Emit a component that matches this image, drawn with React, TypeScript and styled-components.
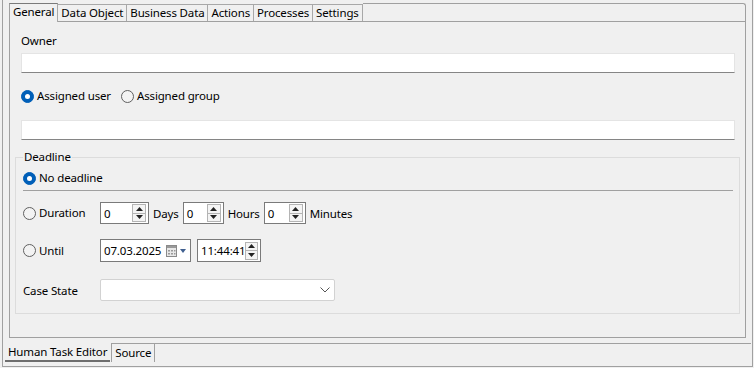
import styled, { createGlobalStyle } from 'styled-components';

const GlobalStyle = createGlobalStyle`
  html, body {
    margin: 0;
    padding: 0;
    background: #f0f0f0;
  }
  body {
    font-family: "Segoe UI", "Noto Sans", sans-serif;
    font-size: 11.5px;
    letter-spacing: -0.15px;
    color: #000;
  }
  * {
    box-sizing: border-box;
  }
`;

const topTabs = ['General', 'Data Object', 'Business Data', 'Actions', 'Processes', 'Settings'];

const SpinArrows = () => (
  <SpinButtons>
    <SpinButton>
      <svg width='7' height='4' viewBox='0 0 7 4'>
        <path d='M0 4 L3.5 0 L7 4 Z' fill='#222' />
      </svg>
    </SpinButton>
    <SpinButton>
      <svg width='7' height='4' viewBox='0 0 7 4'>
        <path d='M0 0 L7 0 L3.5 4 Z' fill='#222' />
      </svg>
    </SpinButton>
  </SpinButtons>
);

const Radio = ({ checked, label }: { checked?: boolean; label: string }) => (
  <RadioItem>
    <RadioDot $checked={checked} />
    <span>{label}</span>
  </RadioItem>
);

const App = () => {
  return (
    <>
      <GlobalStyle />
      <Screen>
        <Frame>
          <Folder>
            <TabStrip>
              {topTabs.map((t, i) => (
                <Tab key={t} $active={i === 0}>
                  {t}
                </Tab>
              ))}
              <TabFiller />
            </TabStrip>
            <Panel>
              <Label>Owner</Label>
              <TextInput $top={4} />
              <RadioRow>
                <Radio checked label='Assigned user' />
                <Radio label='Assigned group' />
              </RadioRow>
              <TextInput $top={16} />

              <Group>
                <Legend>Deadline</Legend>
                <Radio checked label='No deadline' />
                <Separator />

                <FormRow $top={11}>
                  <RowLabel>
                    <Radio label='Duration' />
                  </RowLabel>
                  <SpinBox $width={49}>
                    <SpinValue>0</SpinValue>
                    <SpinArrows />
                  </SpinBox>
                  <Unit>Days</Unit>
                  <SpinBox $width={41}>
                    <SpinValue>0</SpinValue>
                    <SpinArrows />
                  </SpinBox>
                  <Unit>Hours</Unit>
                  <SpinBox $width={42}>
                    <SpinValue>0</SpinValue>
                    <SpinArrows />
                  </SpinBox>
                  <Unit>Minutes</Unit>
                </FormRow>

                <FormRow $top={15}>
                  <RowLabel>
                    <Radio label='Until' />
                  </RowLabel>
                  <SpinBox $width={91} $height={23}>
                    <SpinValue>07.03.2025</SpinValue>
                    <svg width='22' height='12' viewBox='0 0 22 12'>
                      <rect x='0.5' y='0.5' width='10' height='11' fill='#e8e8e8' stroke='#8a8a8a' />
                      <rect x='1' y='1' width='9' height='2' fill='#9a9a9a' />
                      <path d='M2 5h2v1.5H2zM5 5h2v1.5H5zM8 5h1.5v1.5H8zM2 8h2v1.5H2zM5 8h2v1.5H5zM8 8h1.5v1.5H8z' fill='#9a9a9a' />
                      <path d='M14 4 L20 4 L17 8 Z' fill='#3f5f8f' />
                    </svg>
                  </SpinBox>
                  <SpinBox $width={64} $height={23} $gap={6}>
                    <SpinValue>11:44:41</SpinValue>
                    <SpinArrows />
                  </SpinBox>
                </FormRow>

                <FormRow $top={17}>
                  <RowLabel>Case State</RowLabel>
                  <Combo>
                    <svg width='10' height='6' viewBox='0 0 10 6'>
                      <path d='M0.5 0.5 L5 5 L9.5 0.5' fill='none' stroke='#555' strokeWidth='1' />
                    </svg>
                  </Combo>
                </FormRow>
              </Group>
            </Panel>
          </Folder>

          <BottomStrip>
            <BottomTab $active>Human Task Editor</BottomTab>
            <BottomTab>Source</BottomTab>
            <BottomFiller />
          </BottomStrip>
        </Frame>
      </Screen>
    </>
  );
};

const Screen = styled.div`
  width: 754px;
  height: 368px;
  padding: 0 1px 1px 2px;
  display: flex;
  flex-direction: column;
`;

const Frame = styled.div`
  flex: 1;
  display: flex;
  flex-direction: column;
  border: 1px solid #a0a0a0;
  border-top: none;
`;

const Folder = styled.div`
  height: 335px;
  margin: 3px 6px 0 6px;
  display: flex;
  flex-direction: column;
`;

const TabStrip = styled.div`
  display: flex;
  align-items: flex-end;
  height: 18px;
`;

const Tab = styled.div<{ $active?: boolean }>`
  position: relative;
  z-index: 1;
  height: ${(p) => (p.$active ? '19px' : '17px')};
  margin-bottom: ${(p) => (p.$active ? '-1px' : '0')};
  padding: 0 3px;
  line-height: 16px;
  white-space: nowrap;
  background: #f0f0f0;
  border-top: 1px solid ${(p) => (p.$active ? '#7a7a7a' : '#a8a8a8')};
  border-right: 1px solid #a8a8a8;
  &:first-child {
    border-left: 1px solid #a0a0a0;
  }
`;

const TabFiller = styled.div`
  flex: 1;
  height: 18px;
  border-top: 1px solid #a0a0a0;
  border-right: 1px solid #a0a0a0;
  border-top-right-radius: 3px;
`;

const Panel = styled.div`
  flex: 1;
  display: flex;
  flex-direction: column;
  border: 1px solid #a0a0a0;
  padding: 11px 10px 0 11px;
`;

const Label = styled.div`
  line-height: 16px;
`;

const TextInput = styled.div<{ $top: number }>`
  height: 20px;
  margin-top: ${(p) => p.$top}px;
  background: #fff;
  border: 1px solid #e4e4e4;
  border-bottom-color: #858585;
`;

const RadioRow = styled.div`
  display: flex;
  gap: 10px;
  margin-top: 15px;
`;

const RadioItem = styled.label`
  display: flex;
  align-items: center;
  gap: 3px;
  line-height: 16px;
  white-space: nowrap;
`;

const RadioDot = styled.span<{ $checked?: boolean }>`
  width: 13px;
  height: 13px;
  border-radius: 50%;
  display: flex;
  align-items: center;
  justify-content: center;
  border: 1px solid ${(p) => (p.$checked ? '#005fb8' : '#606060')};
  background: ${(p) => (p.$checked ? '#005fb8' : '#f3f3f3')};
  &::after {
    content: '';
    display: ${(p) => (p.$checked ? 'block' : 'none')};
    width: 5px;
    height: 5px;
    border-radius: 50%;
    background: #fff;
  }
`;

const Group = styled.fieldset`
  margin: 9px -5px 0 -6px;
  padding: 5px 6px 12px 7px;
  border: 1px solid #dcdcdc;
  min-width: 0;
`;

const Legend = styled.legend`
  padding: 0 1px;
  line-height: 16px;
`;

const Separator = styled.div`
  height: 1px;
  margin-top: 4px;
  background: #a0a0a0;
`;

const FormRow = styled.div<{ $top: number }>`
  display: flex;
  align-items: center;
  margin-top: ${(p) => p.$top}px;
`;

const RowLabel = styled.div`
  width: 77px;
  flex-shrink: 0;
`;

const SpinBox = styled.div<{ $width: number; $height?: number; $gap?: number }>`
  width: ${(p) => p.$width}px;
  height: ${(p) => p.$height ?? 22}px;
  margin-left: ${(p) => p.$gap ?? 0}px;
  display: flex;
  align-items: center;
  padding: 0 2px 0 3px;
  background: #fff;
  border: 1px solid #7a7a7a;
`;

const SpinValue = styled.span`
  flex: 1;
  white-space: nowrap;
`;

const SpinButtons = styled.div`
  width: 14px;
  height: 18px;
  display: flex;
  flex-direction: column;
`;

const SpinButton = styled.div`
  flex: 1;
  display: flex;
  align-items: center;
  justify-content: center;
  background: #f4f4f4;
  border: 1px solid #b4b4b4;
  & + & {
    border-top: none;
  }
`;

const Unit = styled.span`
  margin: 0 4px;
`;

const Combo = styled.div`
  width: 235px;
  height: 22px;
  display: flex;
  align-items: center;
  justify-content: flex-end;
  padding-right: 4px;
  background: #fff;
  border: 1px solid #d2d2d2;
  border-radius: 2px;
`;

const BottomStrip = styled.div`
  display: flex;
  align-items: flex-start;
  height: 19px;
  margin-top: 5px;
  padding-left: 2px;
`;

const BottomTab = styled.div<{ $active?: boolean }>`
  height: 19px;
  padding: 0 3px;
  line-height: 17px;
  white-space: nowrap;
  border-top: ${(p) => (p.$active ? 'none' : '1px solid #a0a0a0')};
  border-right: ${(p) => (p.$active ? 'none' : '1px solid #a0a0a0')};
  border-left: ${(p) => (p.$active ? 'none' : '1px solid #a0a0a0')};
  border-bottom: ${(p) => (p.$active ? '2px solid #6e6e6e' : 'none')};
  margin-right: ${(p) => (p.$active ? '1px' : '0')};
`;

const BottomFiller = styled.div`
  flex: 1;
  margin-right: 1px;
  border-top: 1px solid #a0a0a0;
`;

export default App;
